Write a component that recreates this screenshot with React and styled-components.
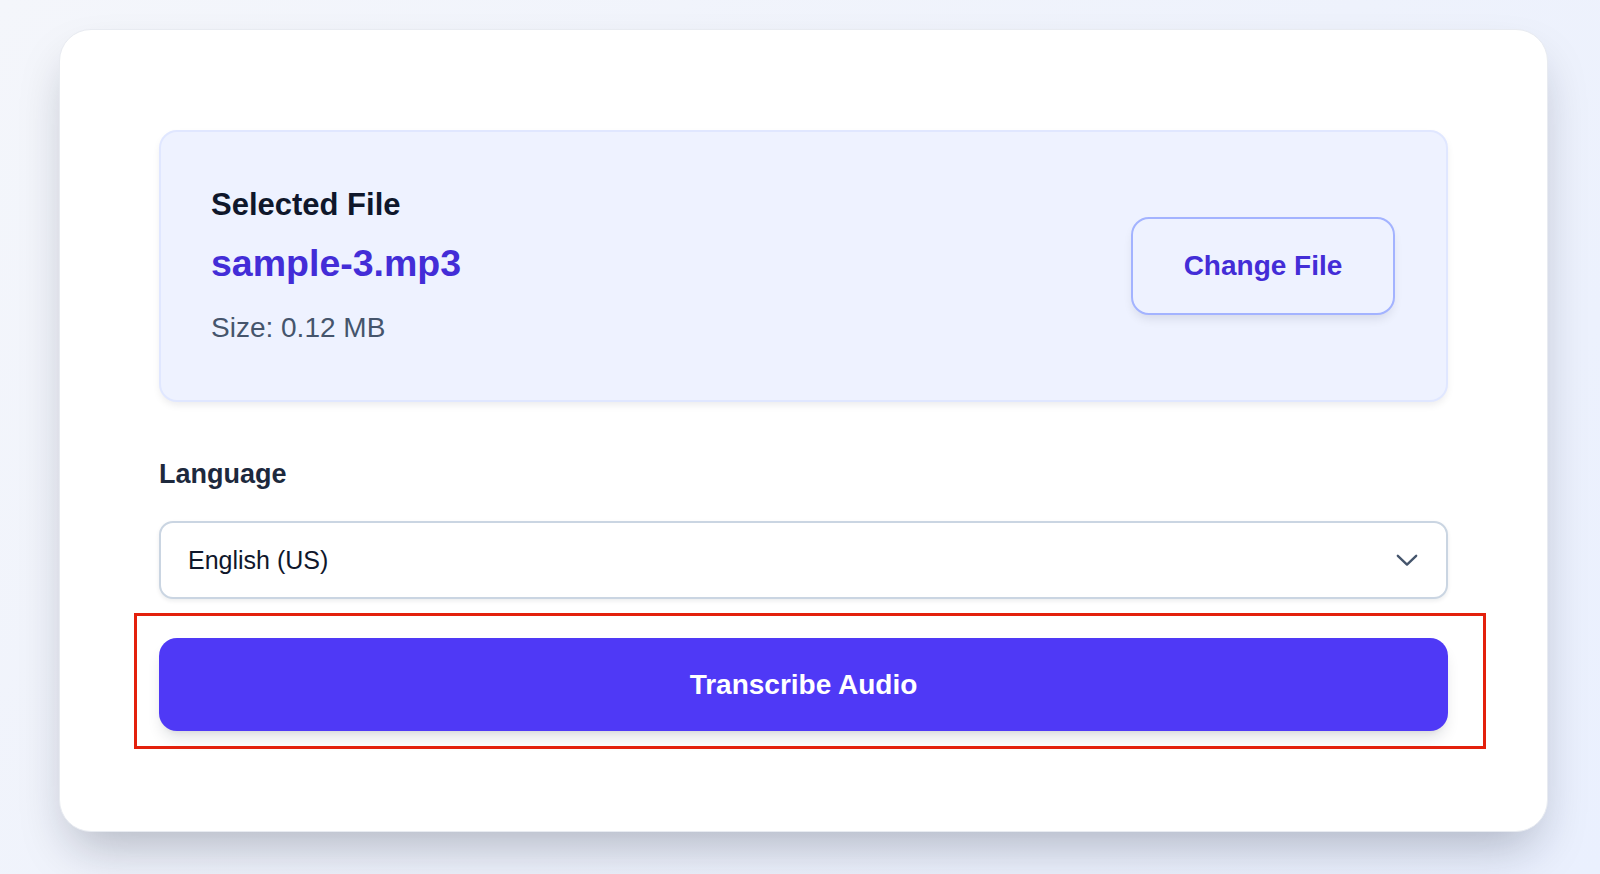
import styled, {createGlobalStyle} from 'styled-components'

// --- Global ---
const GlobalStyle = createGlobalStyle`
  html, body {
    margin: 0;
    padding: 0;
  }
  body {
    font-family: 'Liberation Sans', Arial, sans-serif;
    background: linear-gradient(135deg, #f4f6fb 0%, #eef2fc 55%, #eaf0fe 100%);
    min-height: 874px;
  }
  * {
    box-sizing: border-box;
  }
`

// --- Styled Components ---
const Page = styled.div`
  display: flex;
  justify-content: flex-start;
  padding: 29px 52px 42px 59px;
  min-height: 874px;
`

const Card = styled.div`
  width: 1489px;
  background-color: #ffffff;
  border: 1px solid #e8ebf1;
  border-radius: 32px;
  box-shadow: 0 25px 50px -12px rgba(15, 23, 42, 0.28);
  padding: 100px 99px 99px 99px;
  display: flex;
  flex-direction: column;
`

const FileBox = styled.div`
  display: flex;
  align-items: center;
  justify-content: space-between;
  background-color: #eef2ff;
  border: 2px solid #e0e7ff;
  border-radius: 18px;
  box-shadow: 0 4px 8px -2px rgba(15, 23, 42, 0.1);
  padding: 55px 51px 55px 50px;
`

const FileInfo = styled.div`
  display: flex;
  flex-direction: column;
`

const FileTitle = styled.h3`
  margin: 0;
  font-size: 31px;
  line-height: 36px;
  font-weight: 700;
  color: #0f172b;
`

const FileName = styled.p`
  margin: 18px 0 0;
  font-size: 37.5px;
  line-height: 44px;
  font-weight: 700;
  color: #432dd7;
`

const FileSize = styled.p`
  margin: 26px 0 0;
  font-size: 28px;
  line-height: 34px;
  color: #45556c;
`

const ChangeButton = styled.button`
  width: 264px;
  height: 98px;
  background-color: #eef2ff;
  border: 2px solid #a3b3ff;
  border-radius: 18px;
  box-shadow: 0 6px 12px -4px rgba(15, 23, 42, 0.14);
  font-family: inherit;
  font-size: 28px;
  font-weight: 700;
  color: #432dd7;
  cursor: pointer;
`

const FieldLabel = styled.label`
  display: block;
  margin: 56px 0 0;
  font-size: 27px;
  line-height: 32px;
  font-weight: 700;
  color: #1d293d;
`

const SelectBox = styled.div`
  margin-top: 31px;
  height: 78px;
  display: flex;
  align-items: center;
  justify-content: space-between;
  background-color: #ffffff;
  border: 2px solid #cad5e2;
  border-radius: 14px;
  box-shadow: 0 2px 4px rgba(15, 23, 42, 0.08);
  padding: 0 28px 0 27px;
  font-size: 25px;
  color: #0f172b;
`

const Chevron = styled.svg`
  width: 22px;
  height: 22px;
  color: #45556c;
`

const Highlight = styled.div`
  position: relative;
  margin-top: 39px;
`

const HighlightFrame = styled.div`
  position: absolute;
  top: -25px;
  left: -25px;
  right: -38px;
  bottom: -18px;
  border: 3px solid #e3200c;
  pointer-events: none;
`

const TranscribeButton = styled.button`
  width: 100%;
  height: 93px;
  background-color: #4f39f6;
  border: none;
  border-radius: 18px;
  box-shadow: 0 10px 15px -3px rgba(15, 23, 42, 0.12), 0 4px 6px -4px rgba(15, 23, 42, 0.1);
  font-family: inherit;
  font-size: 28px;
  font-weight: 700;
  color: #ffffff;
  cursor: pointer;
`

// --- App ---
const App = () => (
  <>
    <GlobalStyle />
    <Page>
      <Card>
        <FileBox>
          <FileInfo>
            <FileTitle>Selected File</FileTitle>
            <FileName>sample-3.mp3</FileName>
            <FileSize>Size: 0.12 MB</FileSize>
          </FileInfo>
          <ChangeButton type="button">Change File</ChangeButton>
        </FileBox>

        <FieldLabel>Language</FieldLabel>
        <SelectBox>
          <span>English (US)</span>
          <Chevron viewBox="0 0 24 24" fill="none" stroke="currentColor" strokeWidth="2.6" strokeLinecap="round" strokeLinejoin="round">
            <path d="M2 7.5l10 9.5 10-9.5" />
          </Chevron>
        </SelectBox>

        <Highlight>
          <HighlightFrame />
          <TranscribeButton type="button">Transcribe Audio</TranscribeButton>
        </Highlight>
      </Card>
    </Page>
  </>
)

export default App
